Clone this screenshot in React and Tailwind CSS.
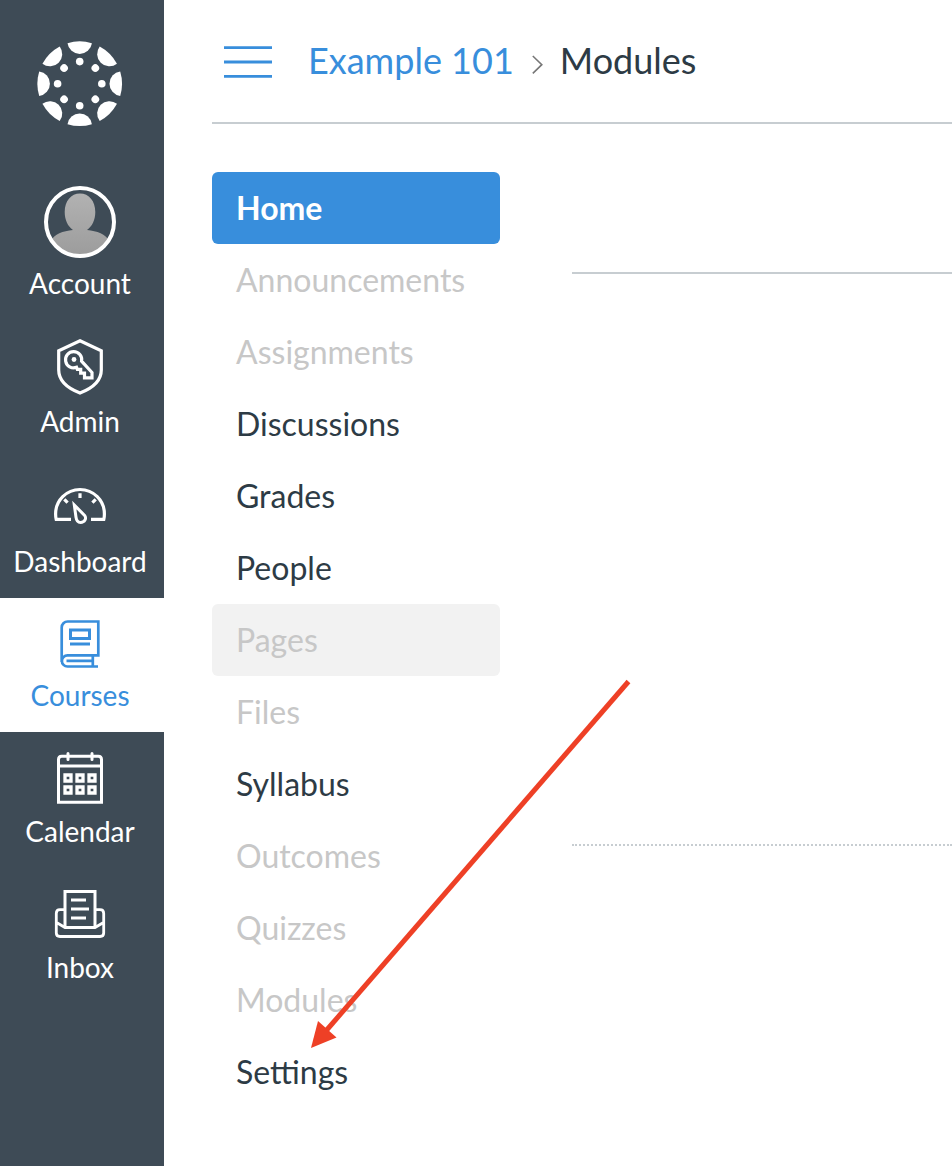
const SEGMENTS = [0, 45, 90, 135, 180, 225, 270, 315];

function Logo() {
  return (
    <svg className="h-24 w-24 shrink-0" viewBox="-47.7 -47.7 96 96" fill="#fff">
      {SEGMENTS.map((angle) => (
        <g key={angle} transform={`rotate(${angle})`}>
          <path d="M-12.2-40.5A42.3 42.3 0 0 1 12.2-40.5A12.3 12.3 0 0 1-12.2-40.5Z" />
          <circle cy="-22.1" r="3.8" />
        </g>
      ))}
    </svg>
  );
}

function Avatar() {
  return (
    <>
      <defs>
        <linearGradient id="person" x1="0" y1="193" x2="0" y2="256" gradientUnits="userSpaceOnUse">
          <stop offset="0" stopColor="#b2b2b2" />
          <stop offset="1" stopColor="#9c9c9c" />
        </linearGradient>
        <clipPath id="avatar-clip">
          <circle cx="80" cy="222" r="33" />
        </clipPath>
      </defs>
      <g clipPath="url(#avatar-clip)" fill="url(#person)" stroke="none">
        <path d="M80 193.500C89 193.500 95.300 201 95.300 212C95.300 220 92 226.500 87 230C97 231 106 234 109 241V258H51V241C54 234 63 231 73 230C68 226.500 64.700 220 64.700 212C64.700 201 71 193.500 80 193.500Z" />
      </g>
      <circle cx="80" cy="222" r="34" strokeWidth="4" />
    </>
  );
}

function AdminIcon() {
  return (
    <>
      <path d="M80 340.800L101.300 350.800V370C101.300 381 93 388 80 393C67 388 58.700 381 58.700 370V350.800Z" />
      <path d="M76.500 367.300A8.100 8.100 0 1 1 81.600 361.200L92 372.500V377.800H84.500V373.200H80.700V369.400H77.300Z" />
      <circle cx="74" cy="359.500" r="2.400" fill="currentColor" stroke="none" />
    </>
  );
}

function DashboardIcon() {
  return (
    <>
      <path d="M71 519.400H56.200Q55.600 517 55.600 513.900A24.400 24.400 0 0 1 104.400 513.900Q104.400 517 103.800 519.400H91" />
      <path d="M80 493.200V498M64.300 499.300L67.600 502.600M95.700 499.300L92.400 502.600" />
      <path d="M74.300 505L76 517.200C76.500 520.800 78 522.400 80.500 522.400C84.800 522.400 86.800 518.400 84.600 515.400Z" strokeWidth="3" />
    </>
  );
}

function CoursesIcon() {
  return (
    <>
      <path d="M61.700 662V627.500A6 6 0 0 1 67.700 621.500H98.300V655.300H67.500A5.600 5.600 0 0 0 67.500 666.500H98M66.500 660.800H92.500M92.800 655.300V666.500" strokeWidth="2.700" />
      <path d="M70.500 630H89.500V638.500H70.500ZM70 644H90" strokeWidth="3" />
    </>
  );
}

function CalendarIcon() {
  return (
    <>
      <path d="M58.500 802.300V759.500Q58.500 756.300 61.700 756.300H98.300Q101.500 756.300 101.500 759.500V802.300ZM58.500 766H101.500" strokeWidth="3" />
      <path d="M68 753.500V759.500M92 753.500V759.500" strokeLinecap="round" strokeWidth="3" />
      <path d="M65 775H71V781H65ZM77 775H83V781H77ZM89 775H95V781H89ZM65 787H71V793H65ZM77 787H83V793H77ZM89 787H95V793H89Z" strokeWidth="3.300" />
    </>
  );
}

function InboxIcon() {
  return (
    <>
      <path d="M65 927.400V891.600H95V927.400M71 900H86M71 909H89M71 918H86" strokeWidth="3" />
      <path d="M64 909.700H60Q56.300 909.700 56.300 913.500V933Q56.300 936.500 60 936.500H100Q103.700 936.500 103.700 933V913.500Q103.700 909.700 100 909.700H96M56.500 922.500L65 927.500H95L103.500 922.500" strokeWidth="2.800" />
    </>
  );
}

const GLOBAL_NAV = [
  { label: 'Account', Icon: Avatar, top: 185, size: 'h-[136px]' },
  { label: 'Admin', Icon: AdminIcon, top: 323, size: 'h-[138px]' },
  { label: 'Dashboard', Icon: DashboardIcon, top: 463, size: 'h-[140px]' },
  { label: 'Courses', Icon: CoursesIcon, top: 597, size: 'h-[134px]', active: true },
  { label: 'Calendar', Icon: CalendarIcon, top: 733, size: 'h-[136px]' },
  { label: 'Inbox', Icon: InboxIcon, top: 869, size: 'h-[136px]' },
];

const COURSE_NAV = [
  { label: 'Home', style: 'bg-[#388edc] font-bold text-white' },
  { label: 'Announcements', style: 'text-[#c7c7c7]' },
  { label: 'Assignments', style: 'text-[#c7c7c7]' },
  { label: 'Discussions', style: 'text-[#2d3b45]' },
  { label: 'Grades', style: 'text-[#2d3b45]' },
  { label: 'People', style: 'text-[#2d3b45]' },
  { label: 'Pages', style: 'bg-[#f2f2f2] text-[#c7c7c7]' },
  { label: 'Files', style: 'text-[#c7c7c7]' },
  { label: 'Syllabus', style: 'text-[#2d3b45]' },
  { label: 'Outcomes', style: 'text-[#c7c7c7]' },
  { label: 'Quizzes', style: 'text-[#c7c7c7]' },
  { label: 'Modules', style: 'text-[#c7c7c7]' },
  { label: 'Settings', style: 'text-[#2d3b45]' },
];

function GlobalNav() {
  return (
    <aside className="flex w-[164px] shrink-0 flex-col bg-[#3e4b56] text-white">
      <div className="flex h-[184px] shrink-0 justify-center pt-9 pr-1">
        <Logo />
      </div>
      <nav className="flex flex-col">
        {GLOBAL_NAV.map(({ label, Icon, top, size, active }) => (
          <a
            key={label}
            className={`flex shrink-0 flex-col items-center justify-end pr-1 pb-[19px] ${size} ${active ? 'bg-white text-[#388edc]' : ''}`}
          >
            <svg
              className="h-20 w-20 shrink-0"
              viewBox={`40 ${top} 80 80`}
              fill="none"
              stroke="currentColor"
              strokeWidth="3.2"
            >
              <Icon />
            </svg>
            <span className="text-[28px] leading-9">{label}</span>
          </a>
        ))}
      </nav>
    </aside>
  );
}

function Header() {
  return (
    <header className="flex h-[124px] items-center border-b-2 border-[#c7cdd1] pl-3">
      <svg className="h-12 w-12" viewBox="0 0 48 48" stroke="#388edc" strokeWidth="2.800">
        <path d="M0 10.700H48M0 25H48M0 39.300H48" />
      </svg>
      <h1 className="mb-0.5 ml-9 flex items-center text-[36px] leading-[48px] text-[#2d3b45]">
        <a className="text-[#388edc]">Example 101</a>
        <svg className="mt-2 ml-[18px] h-5 w-3" viewBox="0 0 12 20" fill="none" stroke="#777" strokeWidth="1.600">
          <path d="M0.800 2L9.800 10.700L0.800 19.400" />
        </svg>
        <span className="ml-4">Modules</span>
      </h1>
    </header>
  );
}

export default function App() {
  return (
    <div className="relative flex h-[1166px] w-[952px] overflow-hidden bg-white font-['Lato',sans-serif]">
      <GlobalNav />
      <div className="flex min-w-0 flex-1 flex-col pl-12">
        <Header />
        <div className="flex pt-12">
          <nav className="flex w-72 shrink-0 flex-col">
            {COURSE_NAV.map(({ label, style }) => (
              <a
                key={label}
                className={`flex h-[72px] items-center rounded-md pl-6 text-[32px] leading-[48px] ${style}`}
              >
                {label}
              </a>
            ))}
          </nav>
          <main className="ml-[72px] flex-1 pt-[100px]">
            <div className="h-[574px] border-t-2 border-b-2 border-[#c7cdd1] [border-bottom-style:dotted]" />
          </main>
        </div>
      </div>
      <svg className="pointer-events-none absolute inset-0 h-full w-full" viewBox="0 0 952 1166">
        <path d="M628.500 681.500L325 1032" stroke="#ee4026" strokeWidth="5" />
        <path d="M311 1048L318 1021L336.500 1037.500Z" fill="#ee4026" />
      </svg>
    </div>
  );
}
